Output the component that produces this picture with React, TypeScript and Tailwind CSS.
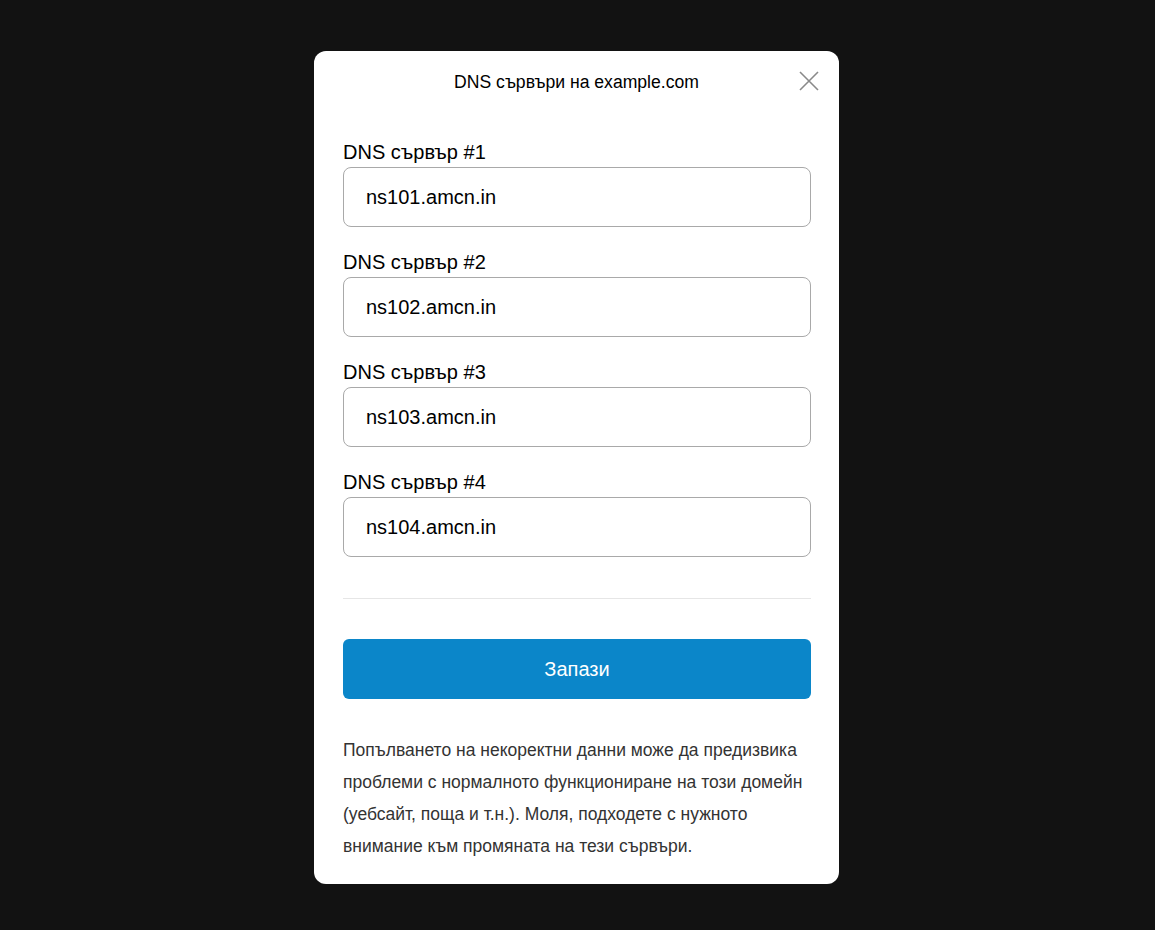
import React, { useState } from 'react';

const FONT = { fontFamily: '"Liberation Sans", Arial, sans-serif' };

type ServerFieldProps = {
  label: string;
  value: string;
  onChange: (v: string) => void;
};

function ServerField({ label, value, onChange }: ServerFieldProps) {
  return (
    <div className="flex flex-col gap-[3px]">
      <label className="text-[20px] leading-6 text-black">{label}</label>
      <input
        type="text"
        value={value}
        onChange={(e) => onChange(e.target.value)}
        className="h-[60px] w-full rounded-lg border border-[#a9a9a9] bg-white px-[22px] text-[20px] text-black focus:outline-none"
        style={FONT}
      />
    </div>
  );
}

export default function App() {
  const [servers, setServers] = useState(['ns101.amcn.in', 'ns102.amcn.in', 'ns103.amcn.in', 'ns104.amcn.in']);

  const update = (i: number, v: string) => setServers((s) => s.map((x, j) => (j === i ? v : x)));

  return (
    <div className="flex min-h-[930px] w-full justify-center bg-[#121212] pr-[2px] pt-[51px]" style={FONT}>
      <div className="flex h-[833px] w-[525px] flex-col rounded-xl bg-white">
        {/* header */}
        <div className="relative flex h-[62px] items-center justify-center">
          <h2 className="text-[17.6px] text-black">DNS сървъри на example.com</h2>
          <button type="button" className="absolute right-[20px] top-[20px] flex h-[20px] w-[20px] items-center justify-center">
            <svg width="20" height="20" viewBox="0 0 20 20" fill="none" stroke="#8a8a8a" strokeWidth="1.6">
              <path d="M1 1 L19 19 M19 1 L1 19" />
            </svg>
          </button>
        </div>

        <div className="flex flex-col px-[29px] pr-[28px] pt-[27px]">
          <div className="flex flex-col gap-[23px]">
            {servers.map((s, i) => (
              <ServerField key={i} label={`DNS сървър #${i + 1}`} value={s} onChange={(v) => update(i, v)} />
            ))}
          </div>

          <div className="mt-[41px] h-px w-full bg-[#e6e6e6]" />

          <button
            type="button"
            className="mt-[40px] h-[60px] w-full rounded-md bg-[#0b86c9] text-[20px] text-white"
          >
            Запази
          </button>

          <p className="mt-[35px] text-[17.5px] leading-[32px] text-[#333333]">
            Попълването на некоректни данни може да предизвика проблеми с нормалното функциониране на този домейн
            (уебсайт, поща и т.н.). Моля, подходете с нужното внимание към промяната на тези сървъри.
          </p>
        </div>
      </div>
    </div>
  );
}
